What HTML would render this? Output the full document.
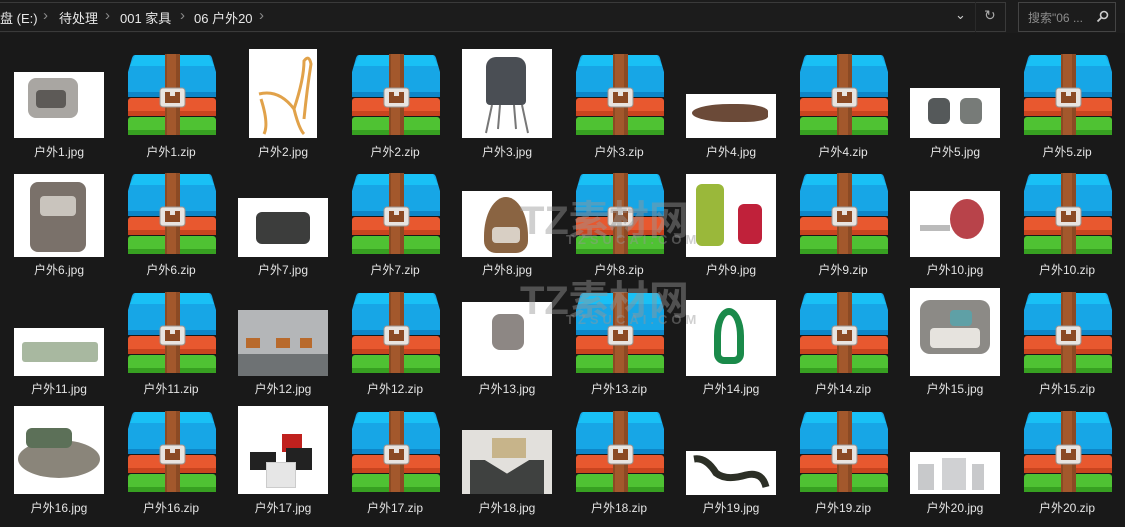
<!DOCTYPE html>
<html><head><meta charset="utf-8"><style>
*{margin:0;padding:0;box-sizing:border-box}
body{width:1125px;height:527px;background:#191919;position:relative;overflow:hidden;font-family:"Liberation Sans","Noto Sans CJK SC",sans-serif;color:#e6e6e6}
.top{position:absolute;left:0;top:0;width:1125px;height:33px;background:#1c1c1c}
.addr{position:absolute;left:-2px;top:2px;width:1008px;height:30px;border:1px solid #3a3a3a;border-left:none}
.bc{position:absolute;top:8px;font-size:13px;color:#e8e8e8;white-space:nowrap}
.sep{position:absolute;top:8px;font-size:15px;line-height:16px;color:#8a8a8a}
.search{position:absolute;left:1018px;top:2px;width:98px;height:30px;border:1px solid #444}
.lbl{position:absolute;width:112px;text-align:center;font-size:12px;color:#e4e4e4;white-space:nowrap}
.img{position:absolute;background:#fff;overflow:hidden}
.zip{position:absolute;width:88px;height:82px}
.wm{position:absolute;color:rgba(150,150,150,0.45);font-weight:bold;white-space:nowrap}
</style></head><body>
<svg width="0" height="0" style="position:absolute"><defs>
<symbol id="z" viewBox="0 0 88 82">
<path d="M7 1 H81 Q83 1 84 4 L88 18 V40 Q88 43 85 43 H3 Q0 43 0 40 V18 L4 4 Q5 1 7 1 Z" fill="#17a6e6"/>
<path d="M7 1 H81 L86 12 H2 Z" fill="#19c0f5"/>
<rect x="0" y="38" width="88" height="5" fill="#0e86c8"/>
<rect x="0" y="44" width="88" height="18" rx="3" fill="#e8582f"/>
<rect x="0" y="57" width="88" height="5" fill="#c9441f"/>
<rect x="0" y="63" width="88" height="18" rx="3" fill="#4fc233"/>
<rect x="0" y="76" width="88" height="5" fill="#37a021"/>
<rect x="37" y="0" width="15" height="81" fill="#8b4a24"/>
<rect x="39" y="0" width="9" height="81" fill="#a3582c"/>
<rect x="32" y="34" width="25" height="19" rx="3" fill="#e8e4e0" stroke="#9b9490" stroke-width="1"/>
<rect x="37" y="38" width="15" height="11" fill="#8b4a24"/>
<rect x="42" y="38" width="5" height="4" fill="#e8e4e0"/>
</symbol></defs></svg>

<div class="top">
<div class="addr"></div>
<span class="bc" style="left:0">盘 (E:)</span><span class="sep" style="left:43px">›</span>
<span class="bc" style="left:59px">待处理</span><span class="sep" style="left:105px">›</span>
<span class="bc" style="left:120px">001 家具</span><span class="sep" style="left:180px">›</span>
<span class="bc" style="left:194px">06 户外20</span><span class="sep" style="left:259px">›</span>
<span style="position:absolute;left:955px;top:7px;font-size:13px;color:#ccc">⌄</span>
<div style="position:absolute;left:975px;top:2px;width:1px;height:30px;background:#2a2a2a"></div>
<span style="position:absolute;left:984px;top:7px;font-size:14px;color:#aaa">↻</span>
<div class="search"></div>
<span style="position:absolute;left:1028px;top:9px;font-size:12px;color:#8c8c8c">搜索"06 ...</span>
<svg style="position:absolute;left:1096px;top:10px" width="13" height="13" viewBox="0 0 13 13"><circle cx="8" cy="5" r="3.5" fill="none" stroke="#ccc" stroke-width="1.6"/><path d="M5.5 7.5 L1.5 11.5" stroke="#ccc" stroke-width="1.8"/></svg>
</div>

<!-- zips -->
<svg class="zip" style="left:128px;top:54px"><use href="#z"/></svg>
<svg class="zip" style="left:352px;top:54px"><use href="#z"/></svg>
<svg class="zip" style="left:576px;top:54px"><use href="#z"/></svg>
<svg class="zip" style="left:800px;top:54px"><use href="#z"/></svg>
<svg class="zip" style="left:1024px;top:54px"><use href="#z"/></svg>
<svg class="zip" style="left:128px;top:173px"><use href="#z"/></svg>
<svg class="zip" style="left:352px;top:173px"><use href="#z"/></svg>
<svg class="zip" style="left:576px;top:173px"><use href="#z"/></svg>
<svg class="zip" style="left:800px;top:173px"><use href="#z"/></svg>
<svg class="zip" style="left:1024px;top:173px"><use href="#z"/></svg>
<svg class="zip" style="left:128px;top:292px"><use href="#z"/></svg>
<svg class="zip" style="left:352px;top:292px"><use href="#z"/></svg>
<svg class="zip" style="left:576px;top:292px"><use href="#z"/></svg>
<svg class="zip" style="left:800px;top:292px"><use href="#z"/></svg>
<svg class="zip" style="left:1024px;top:292px"><use href="#z"/></svg>
<svg class="zip" style="left:128px;top:411px"><use href="#z"/></svg>
<svg class="zip" style="left:352px;top:411px"><use href="#z"/></svg>
<svg class="zip" style="left:576px;top:411px"><use href="#z"/></svg>
<svg class="zip" style="left:800px;top:411px"><use href="#z"/></svg>
<svg class="zip" style="left:1024px;top:411px"><use href="#z"/></svg>

<!-- images row1 -->
<div class="img" style="left:14px;top:72px;width:90px;height:66px"><div style="position:absolute;left:14px;top:6px;width:50px;height:40px;background:#a9a6a2;border-radius:8px"></div><div style="position:absolute;left:22px;top:18px;width:30px;height:18px;background:#5d5a57;border-radius:4px"></div></div>
<div class="img" style="left:249px;top:49px;width:68px;height:89px"><svg width="68" height="89"><path d="M10 45 Q30 40 45 60 Q55 30 55 12 Q60 5 62 15 Q58 40 55 70 M12 50 Q20 75 15 85 M45 60 Q50 80 55 85" fill="none" stroke="#e1a24a" stroke-width="3"/></svg></div>
<div class="img" style="left:462px;top:49px;width:90px;height:89px"><div style="position:absolute;left:24px;top:8px;width:40px;height:48px;background:#4a4e54;border-radius:10px 10px 4px 4px"></div><svg style="position:absolute;left:0;top:0" width="90" height="89"><path d="M30 56 L24 84 M60 56 L66 84 M38 56 L36 80 M52 56 L54 80" stroke="#777" stroke-width="2"/></svg></div>
<div class="img" style="left:686px;top:94px;width:90px;height:44px"><div style="position:absolute;left:6px;top:10px;width:76px;height:18px;background:#6b4a38;border-radius:50% 40% 30% 50%"></div></div>
<div class="img" style="left:910px;top:88px;width:90px;height:50px"><div style="position:absolute;left:18px;top:10px;width:22px;height:26px;background:#55595a;border-radius:6px"></div><div style="position:absolute;left:50px;top:10px;width:22px;height:26px;background:#777b78;border-radius:6px"></div></div>
<!-- row2 -->
<div class="img" style="left:14px;top:174px;width:90px;height:83px"><div style="position:absolute;left:16px;top:8px;width:56px;height:70px;background:#7a716a;border-radius:8px"></div><div style="position:absolute;left:26px;top:22px;width:36px;height:20px;background:#c9c4bd;border-radius:4px"></div></div>
<div class="img" style="left:238px;top:198px;width:90px;height:59px"><div style="position:absolute;left:18px;top:14px;width:54px;height:32px;background:#3c3d3c;border-radius:6px"></div></div>
<div class="img" style="left:462px;top:191px;width:90px;height:66px"><div style="position:absolute;left:22px;top:6px;width:44px;height:56px;background:#8a6442;border-radius:50% 50% 12px 12px / 70% 70% 12px 12px"></div><div style="position:absolute;left:30px;top:36px;width:28px;height:16px;background:#d8cfc4;border-radius:4px"></div></div>
<div class="img" style="left:686px;top:174px;width:90px;height:83px"><div style="position:absolute;left:10px;top:10px;width:28px;height:62px;background:#9ab83a;border-radius:6px"></div><div style="position:absolute;left:52px;top:30px;width:24px;height:40px;background:#c0213a;border-radius:6px"></div></div>
<div class="img" style="left:910px;top:191px;width:90px;height:66px"><div style="position:absolute;left:40px;top:8px;width:34px;height:40px;background:#b8434a;border-radius:50%"></div><div style="position:absolute;left:10px;top:34px;width:30px;height:6px;background:#bbb"></div></div>
<!-- row3 -->
<div class="img" style="left:14px;top:328px;width:90px;height:48px"><div style="position:absolute;left:8px;top:14px;width:76px;height:20px;background:#a8b8a0;border-radius:3px"></div></div>
<div class="img" style="left:238px;top:310px;width:90px;height:66px;background:#b4b6b8"><div style="position:absolute;left:0;top:44px;width:90px;height:22px;background:#6e7274"></div><div style="position:absolute;left:8px;top:28px;width:14px;height:10px;background:#b86a2c"></div><div style="position:absolute;left:38px;top:28px;width:14px;height:10px;background:#b86a2c"></div><div style="position:absolute;left:62px;top:28px;width:12px;height:10px;background:#b86a2c"></div></div>
<div class="img" style="left:462px;top:302px;width:90px;height:74px"><div style="position:absolute;left:30px;top:12px;width:32px;height:36px;background:#8d8784;border-radius:8px"></div></div>
<div class="img" style="left:686px;top:300px;width:90px;height:76px"><div style="position:absolute;left:28px;top:8px;width:30px;height:56px;border:7px solid #1a8a4a;border-radius:50% 50% 10px 10px"></div></div>
<div class="img" style="left:910px;top:288px;width:90px;height:88px"><div style="position:absolute;left:10px;top:12px;width:70px;height:54px;background:#8c8a86;border-radius:10px"></div><div style="position:absolute;left:20px;top:40px;width:50px;height:20px;background:#e6e3de;border-radius:4px"></div><div style="position:absolute;left:40px;top:22px;width:22px;height:16px;background:#5fa0a6;border-radius:4px"></div></div>
<!-- row4 -->
<div class="img" style="left:14px;top:406px;width:90px;height:88px"><div style="position:absolute;left:4px;top:34px;width:82px;height:38px;background:#8a857a;border-radius:50%"></div><div style="position:absolute;left:12px;top:22px;width:46px;height:20px;background:#5c7058;border-radius:6px"></div></div>
<div class="img" style="left:238px;top:406px;width:90px;height:88px"><div style="position:absolute;left:12px;top:46px;width:26px;height:18px;background:#222"></div><div style="position:absolute;left:44px;top:28px;width:20px;height:18px;background:#c0211e"></div><div style="position:absolute;left:48px;top:42px;width:26px;height:22px;background:#222"></div><div style="position:absolute;left:28px;top:56px;width:30px;height:26px;background:#e6e6e6;border:1px solid #ccc"></div></div>
<div class="img" style="left:462px;top:430px;width:90px;height:64px;background:#e2e0dc"><div style="position:absolute;left:30px;top:8px;width:34px;height:20px;background:#c7b48a"></div><div style="position:absolute;left:8px;top:30px;width:74px;height:34px;background:#3f4140;clip-path:polygon(0 0,20% 0,50% 40%,80% 0,100% 0,100% 100%,0 100%)"></div></div>
<div class="img" style="left:686px;top:451px;width:90px;height:44px"><svg width="90" height="44"><path d="M8 8 Q20 6 30 22 Q40 30 60 24 Q76 20 80 36" fill="none" stroke="#2c2f26" stroke-width="7"/></svg></div>
<div class="img" style="left:910px;top:452px;width:90px;height:42px"><div style="position:absolute;left:8px;top:12px;width:16px;height:26px;background:#c8c9cb"></div><div style="position:absolute;left:32px;top:6px;width:24px;height:32px;background:#d0d1d3"></div><div style="position:absolute;left:62px;top:12px;width:12px;height:26px;background:#c8c9cb"></div></div>

<!-- watermark -->
<div class="wm" style="left:520px;top:188px;font-size:40px">TZ素材网</div>
<div class="wm" style="left:566px;top:232px;font-size:13px;letter-spacing:4px">TZSUCAI.COM</div>
<div class="wm" style="left:520px;top:268px;font-size:40px">TZ素材网</div>
<div class="wm" style="left:566px;top:312px;font-size:13px;letter-spacing:4px">TZSUCAI.COM</div>

<!-- labels -->
<div class="lbl" style="left:3px;top:143px">户外1.jpg</div><div class="lbl" style="left:115px;top:143px">户外1.zip</div><div class="lbl" style="left:227px;top:143px">户外2.jpg</div><div class="lbl" style="left:339px;top:143px">户外2.zip</div><div class="lbl" style="left:451px;top:143px">户外3.jpg</div><div class="lbl" style="left:563px;top:143px">户外3.zip</div><div class="lbl" style="left:675px;top:143px">户外4.jpg</div><div class="lbl" style="left:787px;top:143px">户外4.zip</div><div class="lbl" style="left:899px;top:143px">户外5.jpg</div><div class="lbl" style="left:1011px;top:143px">户外5.zip</div>
<div class="lbl" style="left:3px;top:261px">户外6.jpg</div><div class="lbl" style="left:115px;top:261px">户外6.zip</div><div class="lbl" style="left:227px;top:261px">户外7.jpg</div><div class="lbl" style="left:339px;top:261px">户外7.zip</div><div class="lbl" style="left:451px;top:261px">户外8.jpg</div><div class="lbl" style="left:563px;top:261px">户外8.zip</div><div class="lbl" style="left:675px;top:261px">户外9.jpg</div><div class="lbl" style="left:787px;top:261px">户外9.zip</div><div class="lbl" style="left:899px;top:261px">户外10.jpg</div><div class="lbl" style="left:1011px;top:261px">户外10.zip</div>
<div class="lbl" style="left:3px;top:380px">户外11.jpg</div><div class="lbl" style="left:115px;top:380px">户外11.zip</div><div class="lbl" style="left:227px;top:380px">户外12.jpg</div><div class="lbl" style="left:339px;top:380px">户外12.zip</div><div class="lbl" style="left:451px;top:380px">户外13.jpg</div><div class="lbl" style="left:563px;top:380px">户外13.zip</div><div class="lbl" style="left:675px;top:380px">户外14.jpg</div><div class="lbl" style="left:787px;top:380px">户外14.zip</div><div class="lbl" style="left:899px;top:380px">户外15.jpg</div><div class="lbl" style="left:1011px;top:380px">户外15.zip</div>
<div class="lbl" style="left:3px;top:499px">户外16.jpg</div><div class="lbl" style="left:115px;top:499px">户外16.zip</div><div class="lbl" style="left:227px;top:499px">户外17.jpg</div><div class="lbl" style="left:339px;top:499px">户外17.zip</div><div class="lbl" style="left:451px;top:499px">户外18.jpg</div><div class="lbl" style="left:563px;top:499px">户外18.zip</div><div class="lbl" style="left:675px;top:499px">户外19.jpg</div><div class="lbl" style="left:787px;top:499px">户外19.zip</div><div class="lbl" style="left:899px;top:499px">户外20.jpg</div><div class="lbl" style="left:1011px;top:499px">户外20.zip</div>
</body></html>
